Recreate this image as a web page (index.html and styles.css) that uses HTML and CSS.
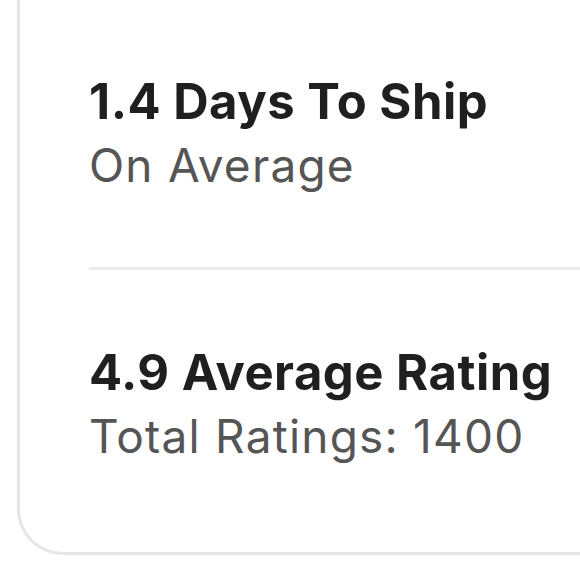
FILE: index.html
```html
<!DOCTYPE html>
<html lang="en">
<head>
    <meta charset="UTF-8">
    <meta name="viewport" content="width=device-width, initial-scale=1.0">
    <title>Shop stats</title>
    <link rel="stylesheet" href="styles.css">
</head>
<body>
<div class="stats-card">
    <div class="stat">
        <div class="stat-title">1.4 Days To Ship</div>
        <div class="stat-sub">On Average</div>
    </div>
    <div class="stat">
        <div class="stat-title">4.9 Average Rating</div>
        <div class="stat-sub">Total Ratings: 1400</div>
    </div>
</div>
</body>
</html>
```

FILE: styles.css
```css
html, body {
    margin: 0;
    padding: 0;
    background: #ffffff;
    overflow: hidden;
    height: 100%;
}
body {
    font-family: Inter, "Open Sans", sans-serif;
}
.stats-card {
    margin: -60px 0 0 17px;
    width: 563px;
    border: 3px solid #e6e6e6;
    border-right: none;
    border-radius: 46px 0 0 46px;
    padding: 0 0 0 69px;
    box-sizing: border-box;
}
.stat {
    padding: 127px 0 70px;
}
.stat + .stat {
    padding-top: 71px;
    padding-bottom: 84px;
}
.stat:not(:last-child) {
    border-bottom: 3px solid #ebebeb;
}
.stat-title {
    font-size: 49px;
    font-weight: 700;
    line-height: 64px;
    letter-spacing: 0.5px;
    color: #1f1f1f;
}
.stat-sub {
    font-size: 46px;
    font-weight: 400;
    line-height: 63px;
    letter-spacing: 1.2px;
    color: #555555;
}
```
